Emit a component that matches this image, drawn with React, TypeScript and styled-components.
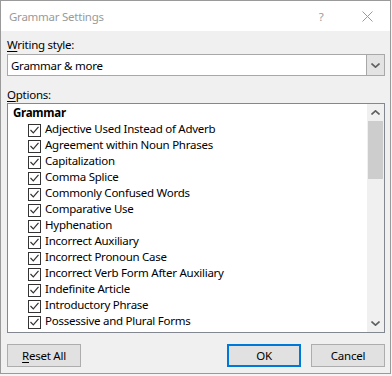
import React from 'react';
import styled, { createGlobalStyle } from 'styled-components';

const GlobalStyle = createGlobalStyle`
  html, body {
    margin: 0;
    padding: 0;
    background: #f4f4f4;
  }
  body {
    font-family: 'Noto Sans', 'Liberation Sans', sans-serif;
    font-size: 11.5px;
    letter-spacing: -0.25px;
    color: #000;
  }
`;

const Window = styled.div`
  width: 389px;
  height: 372px;
  border: 1px solid #9a9a9a;
  background: #f0f0f0;
  display: flex;
  flex-direction: column;
`;

const TitleBar = styled.div`
  height: 30px;
  background: #fff;
  display: flex;
  align-items: center;
  padding-left: 8px;
  color: #9a9a9a;
`;

const TitleText = styled.div`
  flex: 1;
`;

const TitleButton = styled.div`
  width: 46px;
  height: 30px;
  display: flex;
  align-items: center;
  justify-content: center;
  color: #9a9a9a;
`;

const Body = styled.div`
  flex: 1;
  display: flex;
  flex-direction: column;
  padding: 6px 5px 0 6px;
`;

const Label = styled.div<{ $gap: number }>`
  line-height: 15px;
  height: 15px;
  margin-bottom: ${({ $gap }) => $gap}px;
`;

const Combo = styled.div`
  height: 20px;
  border: 1px solid #a8a8a8;
  background: #fff;
  display: flex;
  align-items: stretch;
  margin-bottom: 11px;
`;

const ComboValue = styled.div`
  flex: 1;
  display: flex;
  align-items: center;
  padding-left: 3px;
`;

const ComboButton = styled.div`
  width: 17px;
  border-left: 1px solid #a8a8a8;
  background: #e3e3e3;
  display: flex;
  align-items: center;
  justify-content: center;
`;

const ListBox = styled.div`
  height: 228px;
  border: 1px solid #828790;
  background: #fff;
  display: flex;
  margin-bottom: 11px;
`;

const ListItems = styled.div`
  flex: 1;
  overflow: hidden;
  padding-top: 1px;
`;

const GroupHeader = styled.div`
  height: 16px;
  line-height: 16px;
  font-weight: 700;
  padding-left: 5px;
`;

const Row = styled.div`
  height: 16px;
  display: flex;
  align-items: center;
  padding-left: 20px;
`;

const Check = styled.div`
  width: 11px;
  height: 11px;
  border: 1px solid #333;
  background: #fff;
  margin: 2px 4px 0 0;
  display: flex;
  align-items: center;
  justify-content: center;
  flex: none;
`;

const RowText = styled.span`
  line-height: 16px;
  white-space: nowrap;
`;

const ScrollBar = styled.div`
  width: 17px;
  background: #f0f0f0;
  display: flex;
  flex-direction: column;
`;

const ScrollArrow = styled.div`
  height: 17px;
  display: flex;
  align-items: center;
  justify-content: center;
`;

const ScrollTrack = styled.div`
  flex: 1;
  display: flex;
  flex-direction: column;
`;

const Thumb = styled.div`
  height: 58px;
  margin: 0 1px;
  background: #cdcdcd;
`;

const Footer = styled.div`
  display: flex;
  justify-content: space-between;
`;

const ButtonGroup = styled.div`
  display: flex;
  gap: 10px;
`;

const Button = styled.div<{ $default?: boolean }>`
  width: 74px;
  height: 23px;
  box-sizing: border-box;
  background: #e1e1e1;
  border: ${({ $default }) => ($default ? '2px solid #0078d7' : '1px solid #adadad')};
  display: flex;
  align-items: center;
  justify-content: center;
`;

const Key = styled.span`
  text-decoration: underline;
  text-underline-offset: 2px;
`;

const Chevron = ({ up }: { up?: boolean }) => (
  <svg width="9" height="5" viewBox="0 0 9 5">
    <path
      d={up ? 'M0.5 4.5 L4.5 0.8 L8.5 4.5' : 'M0.5 0.5 L4.5 4.2 L8.5 0.5'}
      fill="none"
      stroke="#606060"
      strokeWidth="1.6"
    />
  </svg>
);

const CheckMark = () => (
  <svg width="9" height="8" viewBox="0 0 9 8">
    <path d="M0.5 4 L3.3 6.8 L8.5 0.8" fill="none" stroke="#333" strokeWidth="1.2" />
  </svg>
);

const options = [
  'Adjective Used Instead of Adverb',
  'Agreement within Noun Phrases',
  'Capitalization',
  'Comma Splice',
  'Commonly Confused Words',
  'Comparative Use',
  'Hyphenation',
  'Incorrect Auxiliary',
  'Incorrect Pronoun Case',
  'Incorrect Verb Form After Auxiliary',
  'Indefinite Article',
  'Introductory Phrase',
  'Possessive and Plural Forms',
];

export default function App() {
  return (
    <>
      <GlobalStyle />
      <Window>
        <TitleBar>
          <TitleText>Grammar Settings</TitleText>
          <TitleButton>?</TitleButton>
          <TitleButton>
            <svg width="11" height="11" viewBox="0 0 11 11">
              <path d="M0.5 0.5 L10.5 10.5 M10.5 0.5 L0.5 10.5" stroke="#9a9a9a" strokeWidth="1" />
            </svg>
          </TitleButton>
        </TitleBar>
        <Body>
          <Label $gap={2}>
            <Key>W</Key>riting style:
          </Label>
          <Combo>
            <ComboValue>Grammar &amp; more</ComboValue>
            <ComboButton>
              <Chevron />
            </ComboButton>
          </Combo>
          <Label $gap={1}>
            <Key>O</Key>ptions:
          </Label>
          <ListBox>
            <ListItems>
              <GroupHeader>Grammar</GroupHeader>
              {options.map((o) => (
                <Row key={o}>
                  <Check>
                    <CheckMark />
                  </Check>
                  <RowText>{o}</RowText>
                </Row>
              ))}
              <Row>
                <Check>
                  <CheckMark />
                </Check>
              </Row>
            </ListItems>
            <ScrollBar>
              <ScrollArrow>
                <Chevron up />
              </ScrollArrow>
              <ScrollTrack>
                <Thumb />
              </ScrollTrack>
              <ScrollArrow>
                <Chevron />
              </ScrollArrow>
            </ScrollBar>
          </ListBox>
          <Footer>
            <Button>
              <span>
                <Key>R</Key>eset All
              </span>
            </Button>
            <ButtonGroup>
              <Button $default>OK</Button>
              <Button>Cancel</Button>
            </ButtonGroup>
          </Footer>
        </Body>
      </Window>
    </>
  );
}
